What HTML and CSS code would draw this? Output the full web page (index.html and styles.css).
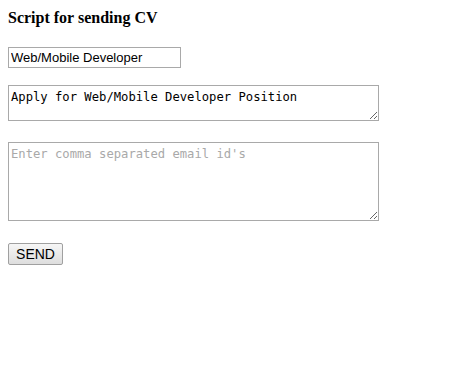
FILE: index.html
```html
<!DOCTYPE html>
<html lang="en">
<head>
  <meta charset="UTF-8">
  <title>Script for sending CV</title>
  <link rel="stylesheet" href="styles.css">
</head>
<body>
  <form class="cv-form" onsubmit="return false;">
    <h4 class="title">Script for sending CV</h4>
    <input class="subject" type="text" value="Web/Mobile Developer">
    <textarea class="body-text">Apply for Web/Mobile Developer Position</textarea>
    <textarea class="emails" placeholder="Enter comma separated email id's"></textarea>
    <button class="send" type="submit">SEND</button>
  </form>
</body>
</html>
```

FILE: styles.css
```css
body { margin: 8px; font-family: "Liberation Serif", serif; background: #fff; }
.cv-form { display: flex; flex-direction: column; align-items: flex-start; }
.title { margin: 0; font-size: 16px; line-height: 19px; font-weight: bold; color: #000; }
.subject { margin-top: 20px; width: 173px; height: 21px; box-sizing: border-box; padding: 0 2px; border: 1px solid #a9a9a9; font-family: "Liberation Sans", Arial, sans-serif; font-size: 13px; color: #000; }
textarea { box-sizing: border-box; width: 371px; padding: 4px 2px 2px; border: 1px solid #a9a9a9; font-family: "DejaVu Sans Mono", monospace; font-size: 12.2px; color: #000; resize: both; }
textarea::placeholder { color: #a9a9a9; }
.body-text { margin-top: 17px; height: 36px; }
.emails { margin-top: 21px; height: 79px; }
.send { margin-top: 22px; width: 55px; height: 22px; padding: 0; border: 1px solid #a0a0a0; border-radius: 2px; background: linear-gradient(#f6f6f6, #dedede); font-family: "Liberation Sans", Arial, sans-serif; font-size: 14px; color: #000; }
```
